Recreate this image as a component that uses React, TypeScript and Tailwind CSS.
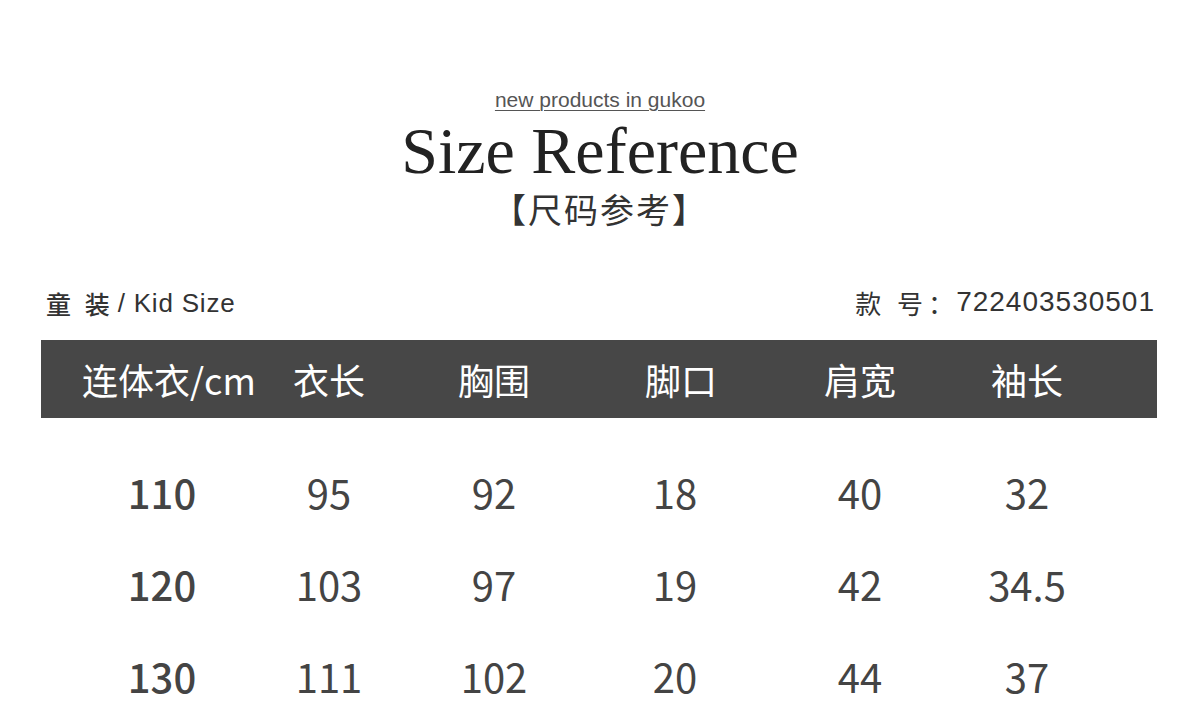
const cols = [
  { label: "连体衣/cm", w: "w-[160px]" },
  { label: "衣长", w: "w-[158px]" },
  { label: "胸围", w: "w-[172px]" },
  { label: "脚口", w: "w-[202px]" },
  { label: "肩宽", w: "w-[156px]" },
  { label: "袖长", w: "w-[178px]" },
];

const rows = [
  ["110", "95", "92", "18", "40", "32"],
  ["120", "103", "97", "19", "42", "34.5"],
  ["130", "111", "102", "20", "44", "37"],
];

const cjk = "font-['Noto_Sans_CJK_SC',sans-serif]";
const sans = "font-['Liberation_Sans','Noto_Sans_CJK_SC',sans-serif]";

export default function App() {
  return (
    <div className="w-[1200px] h-[719px] bg-white overflow-hidden">
      {/* title block */}
      <div className="pt-[88px] flex flex-col items-center">
        <div
          className={`${sans} text-[21px] leading-[24px] text-[#555] underline decoration-[#555] decoration-1 underline-offset-[3px]`}
        >
          new products in gukoo
        </div>
        <div className="mt-[6px] font-['Liberation_Serif',serif] text-[66px] leading-[66px] text-[#222]">
          Size Reference
        </div>
        <div className={`${cjk} mt-[5px] text-[34px] leading-[40px] tracking-[2px] text-[#333]`}>
          【尺码参考】
        </div>
      </div>

      {/* style line */}
      <div className="mt-[54px] flex items-end justify-between pl-[46px] pr-[45px] h-[40px]">
        <div className="flex items-center text-[#333]">
          <span className={`${cjk} text-[25px] font-medium tracking-[4px]`}>童 装</span>
          <span className={`${sans} text-[26px] tracking-[0.8px] ml-[4px]`}>/ Kid Size</span>
        </div>
        <div className="flex items-center text-[#333]">
          <span className={`${cjk} text-[26px] tracking-[5px]`}>款 号</span>
          <span className={`${cjk} text-[26px] mr-[2px]`}>：</span>
          <span className={`${sans} text-[28px] tracking-[1px]`}>722403530501</span>
        </div>
      </div>

      {/* table */}
      <div className="mt-[17px] ml-[41px] w-[1116px]">
        <div className="h-[78px] bg-[#474747] flex items-center pl-[49px]">
          {cols.map((c, i) => (
            <div
              key={c.label}
              className={`${c.w} ${cjk} text-center text-white text-[36px] leading-[40px] whitespace-nowrap ${
                i === 0 ? "-ml-[8px] mr-[8px]" : ""
              }`}
            >
              {c.label}
            </div>
          ))}
        </div>
        <div className="pt-[28px]">
          {rows.map((r) => (
            <div key={r[0]} className="h-[92px] flex items-center pl-[49px]">
              {r.map((v, i) => (
                <div
                  key={i}
                  className={`${cols[i].w} ${cjk} text-center text-[40px] leading-[48px] text-[#444] ${
                    i === 0 ? "font-medium pr-[16px]" : i === 3 ? "pr-[12px]" : ""
                  }`}
                >
                  {v}
                </div>
              ))}
            </div>
          ))}
        </div>
      </div>
    </div>
  );
}
